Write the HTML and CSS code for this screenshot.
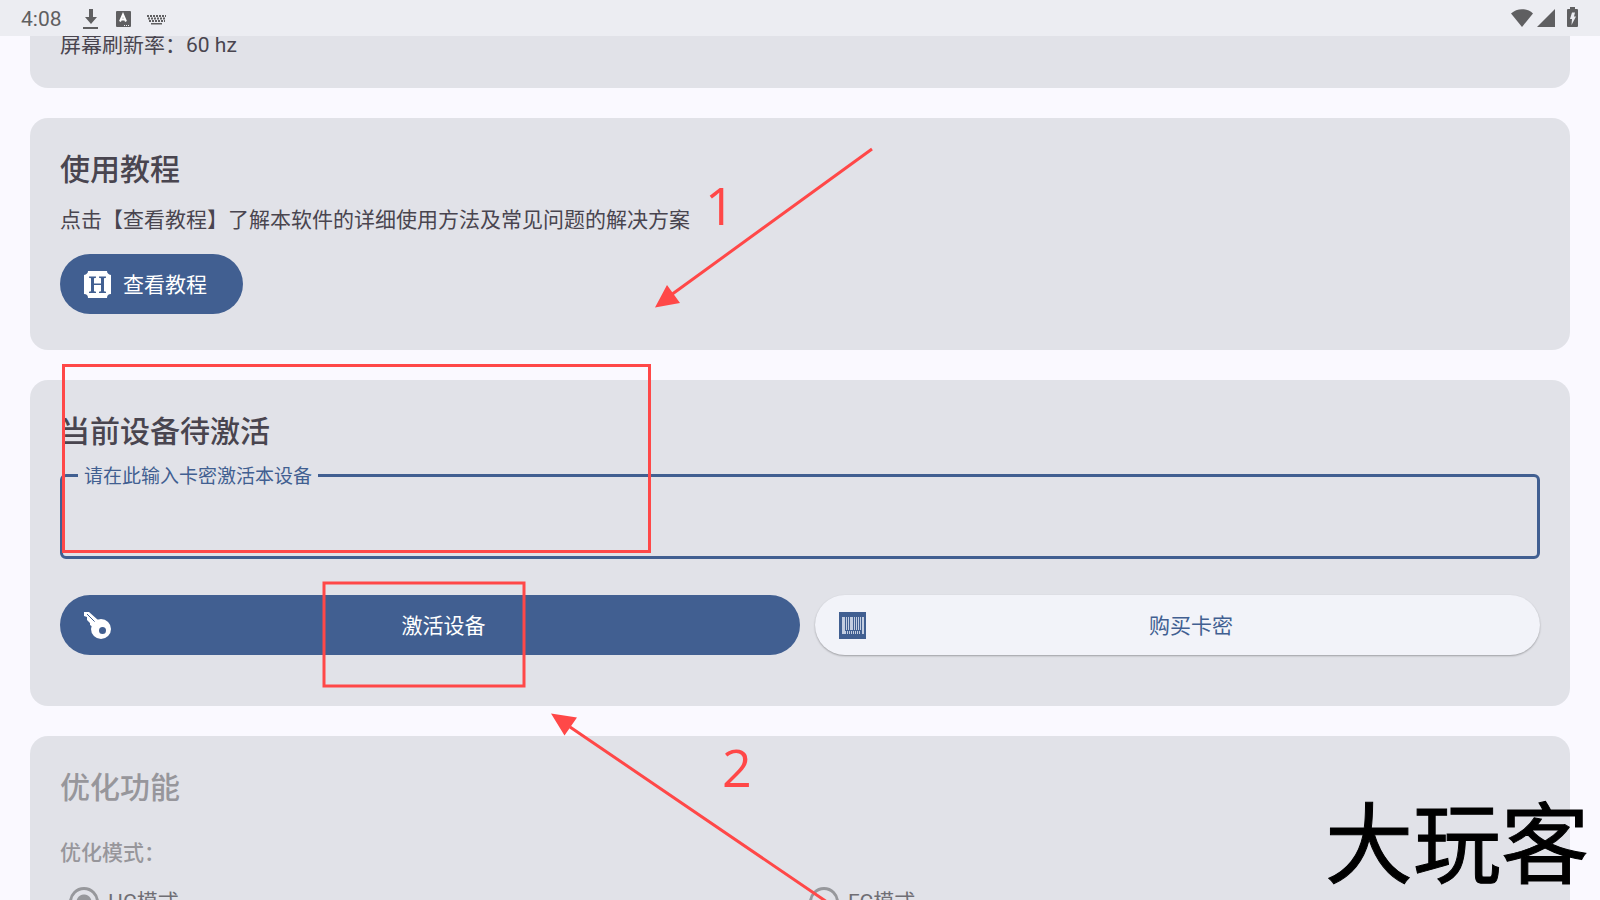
FILE: index.html
```html
<!DOCTYPE html>
<html lang="zh-CN">

<head>
    <meta charset="UTF-8">
    <meta name="viewport" content="width=device-width, initial-scale=1.0">
    <title>设备激活</title>
    <link rel="stylesheet" href="styles.css">
</head>

<body>
    <header class="status-bar">
        <span class="time">4:08</span>
        <div class="status-left">
            <svg width="16" height="22" viewBox="0 0 16 22">
                <path d="M6 2h4v8h4l-6 7-6-7h4z" />
                <path d="M0 20h15v2H0z" />
            </svg>
            <svg width="16" height="22" viewBox="0 0 16 22">
                <rect x="1" y="4" width="15" height="16" rx="1" />
                <path class="cut" d="M5 14.500l3-7 3 7M6 12.500h4" />
                <path class="dots" d="M9 18.500h6" />
            </svg>
            <svg width="20" height="22" viewBox="0 0 20 22">
                <path class="keys" d="M0 9h19M1 11.500h17M2 14h16" />
                <path d="M4 16h11v1.500H4z" />
            </svg>
        </div>
        <div class="status-right">
            <svg width="24" height="22" viewBox="0 0 24 22">
                <path d="M12 20L1 6.500C7 .8 17 .8 23 6.500z" />
            </svg>
            <svg width="18" height="22" viewBox="0 0 18 22">
                <path d="M0 20L18 2v18z" />
            </svg>
            <svg width="12" height="22" viewBox="0 0 12 22">
                <path d="M3 2V0h5v2h2q1 0 1 1v16q0 1-1 1H1q-1 0-1-1V3q0-1 1-1z" />
                <path class="bolt" d="M5 5.500h3L7 9.500h2L4.500 18l.5-6H3z" />
            </svg>
        </div>
    </header>

    <main class="content">
        <section class="card card-info">
            <p>屏幕刷新率：60 hz</p>
        </section>

        <section class="card card-guide">
            <h2>使用教程</h2>
            <p>点击【查看教程】了解本软件的详细使用方法及常见问题的解决方案</p>
            <button type="button" class="btn">
                <svg width="27" height="27" viewBox="0 0 27 27">
                    <path fill="#fff" d="M4 0h19q0 3 4 4v19q-4 0-4 4H4q0-4-4-4V4q4-1 4-4z" />
                    <path fill="#415f91" d="M5 5.500h7v1.200l-2 .5v5.300h7V7.200l-2-.5V5.500h7v1.200l-2 .5v13l2 .5v1.200h-7v-1.200l2-.5v-6.300h-7v6.300l2 .5v1.200H5v-1.200l2-.5v-13l-2-.5z" />
                </svg>
                <span>查看教程</span>
            </button>
        </section>

        <section class="card card-activate">
            <h2>当前设备待激活</h2>
            <div class="field">
                <label for="card-key">请在此输入卡密激活本设备</label>
                <input type="text" id="card-key" name="card-key">
            </div>
            <div class="buttons">
                <button type="button" class="btn">
                    <svg width="27" height="27" viewBox="0 0 27 27">
                        <path fill="#fff" d="M0 0h5l9 8-5 7-3-2v-2l-3-3V5L0 4z" />
                        <path stroke="#415f91" d="M3 2l8 8" />
                        <circle cx="17" cy="17" r="10" fill="#fff" />
                        <circle cx="18.500" cy="18.500" r="3.500" fill="#415f91" />
                    </svg>
                    <span>激活设备</span>
                </button>
                <button type="button" class="btn btn-light">
                    <svg width="27" height="27" viewBox="0 0 27 27">
                        <path fill="#415f91" d="M0 0h27v27H0z" />
                        <path fill="#c3cde0" d="M3 5h3v17H3zM7 5h1v13H7zM9 5h1v13H9zM11 5h3v13h-3zM15 5h1v13h-1zM17 5h1v13h-1zM19 5h1v13h-1zM21 5h1v13h-1zM23 5h2v17h-2z" />
                        <path stroke="#c3cde0" stroke-width="3" stroke-dasharray="1 1" d="M6 20.500h16" />
                    </svg>
                    <span>购买卡密</span>
                </button>
            </div>
        </section>

        <section class="card card-optimize">
            <h2>优化功能</h2>
            <h3>优化模式：</h3>
            <div class="modes">
                <label><input type="radio" name="mode" value="hc" checked>HC模式</label>
                <label><input type="radio" name="mode" value="fc">FC模式</label>
            </div>
        </section>
    </main>

    <!-- Step marks drawn over the page -->
    <svg class="marks" width="1600" height="900" viewBox="0 0 1600 900">
        <rect x="63.500" y="365.500" width="586" height="186" />
        <rect x="324" y="583" width="200" height="103" />
        <path d="M872 149L671 295M570 727L827 902" />
        <path class="head" d="M655 307.500L667 285l13 18zM551 713.500l26 4-12.500 18z" />
        <text x="705" y="225">1</text>
        <text x="722" y="787">2</text>
    </svg>

    <div class="watermark">大玩客</div>
</body>

</html>
```

FILE: styles.css
```css
/* General styles */
* {
    box-sizing: border-box;
}

body {
    font-family: Roboto, "Noto Sans CJK SC", sans-serif;
    font-size: 21px;
    line-height: 30px;
    color: #49454f;
    background-color: #faf9ff;
    margin: 0;
    height: 100vh;
    display: flex;
    flex-direction: column;
    overflow: hidden;
    position: relative;
}

h2,
h3,
p {
    margin: 0;
}

h2 {
    font-size: 30px;
    line-height: 44px;
    font-weight: 500;
}

h3 {
    font-size: 21px;
    font-weight: 500;
}

/* Status bar */
.status-bar {
    flex: none;
    height: 36px;
    padding: 0 21px;
    display: flex;
    align-items: center;
    background-color: #ecedf2;
    color: #5f5f61;
    position: relative;
    z-index: 1;
}

.time {
    line-height: 32px;
    padding-top: 2px;
}

.status-bar svg {
    fill: #5f5f61;
}

.status-left {
    display: flex;
    gap: 16px;
    margin-left: 21px;
}

.status-right {
    display: flex;
    gap: 3px;
    margin-left: auto;
}

.status-right svg:last-child {
    margin-left: 9px;
}

.status-bar .cut {
    fill: none;
    stroke: #fff;
    stroke-width: 2;
}

.status-bar .dots {
    stroke: #ecedf2;
    stroke-width: 1;
    stroke-dasharray: 1 1;
}

.status-bar .keys {
    stroke: #5f5f61;
    stroke-width: 2;
    stroke-dasharray: 2 1;
}

.status-bar .bolt {
    fill: #ecedf2;
}

/* Cards */
.content {
    flex: 1;
    min-height: 0;
    padding: 0 30px;
    overflow: hidden;
}

.card {
    background-color: #e1e2e8;
    border-radius: 18px;
    padding: 30px;
    margin-bottom: 30px;
}

/* First card is scrolled up under the status bar */
.card-info {
    margin-top: -36px;
    padding-bottom: 28px;
}

.card-guide {
    padding-bottom: 36px;
}

.card-guide p {
    margin: 13px 0 19px;
}

.card-activate {
    padding-bottom: 51px;
}

/* Buttons */
.btn {
    height: 60px;
    padding: 0 36px 0 24px;
    display: flex;
    align-items: center;
    gap: 12px;
    border: none;
    border-radius: 30px;
    background-color: #415f91;
    color: #fff;
    font: inherit;
    cursor: pointer;
}

.btn svg {
    flex: none;
}

.btn span {
    flex: 1;
    padding-top: 2px;
    text-align: center;
}

.btn-light {
    margin-left: 15px;
    background-color: #f2f3f9;
    color: #415f91;
    box-shadow: 0 1px 2px rgba(0, 0, 0, 0.3);
}

.buttons {
    display: grid;
    grid-template-columns: 1fr 1fr;
    margin-top: 36px;
}

/* Outlined text field */
.field {
    position: relative;
    margin-top: 20px;
}

.field label {
    position: absolute;
    top: -11px;
    left: 18px;
    padding: 0 6px;
    font-size: 19px;
    line-height: 27px;
    color: #415f91;
    background-color: #e1e2e8;
}

.field input {
    display: block;
    width: 100%;
    height: 85px;
    padding: 0 24px;
    border: 3px solid #415f91;
    border-radius: 6px;
    background: none;
    color: inherit;
    font: inherit;
    outline: none;
}

/* Disabled looking section */
.card-optimize {
    color: #97969b;
}

.card-optimize h3 {
    margin-top: 28px;
}

.modes {
    display: grid;
    grid-template-columns: 1fr 1fr;
    margin-top: 19px;
}

.modes label {
    display: flex;
    align-items: center;
    gap: 9px;
    padding-left: 9px;
    color: #6f6e74;
}

.modes input {
    appearance: none;
    width: 30px;
    height: 30px;
    margin: 0;
    border: 3px solid #97989c;
    border-radius: 50%;
}

.modes input:checked {
    background: radial-gradient(circle, #97989c 7px, transparent 8px);
}

/* Step marks */
.marks {
    position: absolute;
    top: 0;
    left: 0;
    z-index: 2;
    fill: none;
    stroke: #ff4848;
    stroke-width: 3;
    pointer-events: none;
}

.marks .head,
.marks text {
    fill: #ff4848;
    stroke: none;
}

.marks text {
    font-family: "Open Sans", sans-serif;
    font-size: 52px;
}

/* Watermark */
.watermark {
    position: absolute;
    right: 11px;
    bottom: 18px;
    z-index: 3;
    font-family: "Noto Sans CJK SC", sans-serif;
    font-size: 88px;
    line-height: 88px;
    font-weight: 400;
    -webkit-text-stroke: 1px #000;
    color: #000;
}
```
